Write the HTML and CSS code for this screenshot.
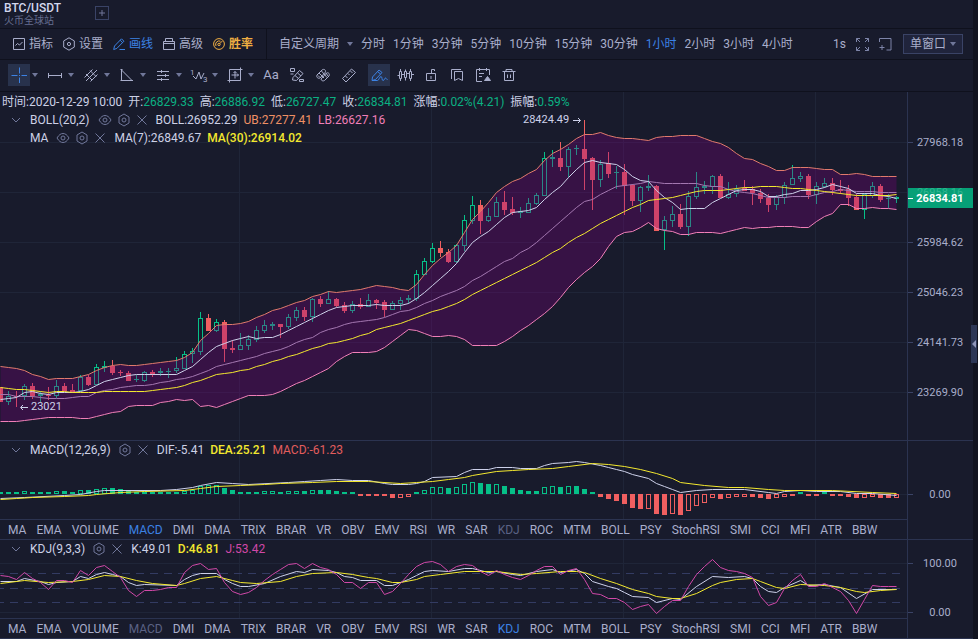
FILE: index.html
```html
<!DOCTYPE html>
<html lang="zh-CN">
<head>
    <meta charset="UTF-8">
    <meta name="viewport" content="width=device-width, initial-scale=1.0">
    <title>BTC/USDT</title>
    <link rel="stylesheet" href="styles.css">
</head>
<body>
    <!-- shared icons -->
    <svg class="symbols" width="0" height="0" aria-hidden="true">
        <symbol id="i-eye" viewBox="0 0 14 12"><path d="M1 6C3 2.6 5 1.5 7 1.5S11 2.6 13 6C11 9.4 9 10.5 7 10.5S3 9.4 1 6z"/><circle cx="7" cy="6" r="2"/></symbol>
        <symbol id="i-hex" viewBox="0 0 12 14"><path d="M6 1l5 3v6l-5 3-5-3V4z"/><circle cx="6" cy="7" r="2"/></symbol>
        <symbol id="i-close" viewBox="0 0 12 12"><path d="M1.5 1.5l9 9M10.5 1.5l-9 9"/></symbol>
        <symbol id="i-down" viewBox="0 0 10 8"><path d="M1 2l4 4 4-4"/></symbol>
    </svg>

    <div class="app">
        <header class="tabbar">
            <div class="pair">
                <h1>BTC/USDT</h1>
                <p>火币全球站</p>
            </div>
            <button class="add" aria-label="添加"><svg width="12" height="12"><path d="M6 3v6M3 6h6"/></svg></button>
        </header>

        <nav class="toolbar">
            <div class="tools">
                <button class="tool"><svg width="12" height="14"><path d="M.5 1.5h11v11H.5zM2.5 8.5l2-2 2 1.5 3-3"/></svg>指标</button>
                <button class="tool"><svg width="12" height="14"><path d="M6 .8l5.3 3.1v6.2L6 13.2.7 10.1V3.9z"/><circle cx="6" cy="7" r="1.6"/></svg>设置</button>
                <button class="tool on"><svg width="12" height="14"><path d="M.7 12.5l.8-3.5 7-7.2 2.4 2.4-7 7.2zM7.2 3.3l2.4 2.4M6.5 12.5H12"/></svg>画线</button>
                <button class="tool"><svg width="12" height="14"><path d="M.5 4.5h11v8H.5zM.5 6.5h11M2.5 4V1.5h7V4"/></svg>高级</button>
                <button class="tool gold"><svg width="12" height="14"><circle cx="6" cy="7" r="5.4"/><path d="M3 9a3.5 3.5 0 0 1 4.5-4.8"/><circle cx="6" cy="7.4" r="1.2"/><path d="M6.8 6.6L9.4 4"/></svg>胜率</button>
            </div>
            <div class="periods">
                <label class="period-select"><select aria-label="自定义周期"><option>自定义周期</option></select><i class="caret"></i></label>
                <button>分时</button>
                <button>1分钟</button>
                <button>3分钟</button>
                <button>5分钟</button>
                <button>10分钟</button>
                <button>15分钟</button>
                <button>30分钟</button>
                <button class="on">1小时</button>
                <button>2小时</button>
                <button>3小时</button>
                <button>4小时</button>
            </div>
            <div class="view">
                <button>1s</button>
                <button aria-label="全屏"><svg width="13" height="13"><path d="M.5 4V.5H4M.5.5L4 4M9 .5h3.5V4M12.5.5L9 4M.5 9v3.500H4M.5 12.5L4 9M12.5 9v3.500H9M12.5 12.5L9 9"/></svg></button>
                <button aria-label="新窗口"><svg width="13" height="13"><path d="M.5 4V.5h11.500V12H7.5M3 7v5M.5 9.5h5"/></svg></button>
                <label class="window-select"><select aria-label="窗口"><option>单窗口</option></select><i class="caret"></i></label>
            </div>
        </nav>

        <div class="drawbar">
            <div class="group wide">
                <button class="on" aria-label="十字线"><svg width="16" height="16"><path d="M.5 8.5h6M10.5 8.5h6M8.5.5v6M8.5 10.5v6M8 8.5h1"/></svg></button><i class="caret"></i>
                <button aria-label="线段"><svg width="16" height="16"><path d="M1.5 6v5M14.5 6v5M1.5 8.5h13"/></svg></button><i class="caret"></i>
                <button aria-label="平行线"><svg width="16" height="16"><path d="M1.5 10.5l8-8M3 14L14 3M7.5 14.5l7-7M3 7l6 6M7 3.5l6 6"/></svg></button><i class="caret"></i>
                <button aria-label="三角形"><svg width="16" height="16"><path d="M2.5 3v10.5H13zM1.5 2.5h2M1.5 13.5h2M12 13.5h2"/></svg></button><i class="caret"></i>
                <button aria-label="斐波那契"><svg width="16" height="16"><path d="M2 4.5h12M2 8.5h12M2 12.5h12M6.5 3v3M10.5 7v3M6.5 11v3"/></svg></button><i class="caret"></i>
                <button aria-label="波浪"><svg width="18" height="16"><path d="M3 9l3 3 3-7 2 7 3-6"/><text x="0" y="8">1</text><text x="13" y="15">3</text></svg></button><i class="caret"></i>
                <button aria-label="测量"><svg width="16" height="16"><path d="M2.5 2.5h11v11h-11zM.5 13.5h4M2.5 13v2.5M11.5 2.5h4M13.5.5v4M8 4.5v7M4.5 8h7M6.5 6L8 4.5 9.5 6M10 6.5L11.5 8 10 9.5"/></svg></button><i class="caret"></i>
            </div>
            <div class="group">
                <button class="letters">Aa</button>
                <button aria-label="画笔"><svg width="16" height="16"><path d="M4 10.5l6.5-7L14 6.5l-6.500 7-4-.5zM6 8.500l3.500 3M8.500 6l3.500 3M1.500 1.500h4v3h-4zM10.500 12.500h4v2h-4zM1.500 7h3"/></svg></button>
                <button aria-label="隐藏"><svg width="16" height="16"><path d="M2 8l5-5c2-1.5 4 0 3.5 2L5 11c-2 1-4-1-3-3zM6 12l5.5-6c2-1 3.5 1 2.5 3l-4.5 4.5c-1.5 1-3.5 0-3.5-1.5zM4 6l5 5M6.500 4l5.500 6.500M3 8.500l2 2M11 6l2 3"/></svg></button>
                <button aria-label="尺子"><svg width="16" height="16"><path d="M1.5 11.5l9-9.5 4 3.5-9.5 9.5zM4.5 9l2 2M7 6.5L8.5 8M9.5 4l2 2"/></svg></button>
            </div>
            <div class="group">
                <button class="on" aria-label="自由画"><svg width="17" height="16"><path d="M1 13.5l.5-3.5 6.5-7 3 2.5-6.5 7zM6.5 4.5l3 2.5M1 13.5h5.5c1.5 0 2-4 3.5-4s.5 4 2 4 1.5-2.5 2.5-2.5.5 1.5 2 1.5"/></svg></button>
                <button aria-label="K线"><svg width="17" height="16"><path d="M2.5 4.5h2v7h-2zM7.5 4.5h2v6h-2zM12.5 4.5h2v7h-2zM3.5 2v2M3.5 12v2M8.5 2.5v2M8.5 11v2.500M13.5 2v2M13.5 12v2M.5 8.5h2M5 7.5h2.5M10 6.5h2M15 7.5h2"/></svg></button>
                <button aria-label="锁定"><svg width="16" height="16"><path d="M3.5 6.5h9v7h-9zM8.5 6V2.5h3V4M8 9v3"/></svg></button>
                <button aria-label="书签"><svg width="16" height="16"><path d="M2.5 12V2.5H12M5.5 4.5h8v9l-4-2-4 2z"/></svg></button>
                <button aria-label="日程"><svg width="17" height="16"><path d="M7 14.5H1.5v-12h13V8M4.5 1v3M11.5 1v3M4 6.5h5M4 9.5h3"/><path d="M9.5 13.5l3-4 3 4z" class="fill"/></svg></button>
                <button aria-label="删除"><svg width="16" height="16"><path d="M1.5 4.5h13M5 4V2.5h6V4M3.5 4.5v9h9v-9M6.5 7.5V11M9.5 7.5V11"/></svg></button>
            </div>
        </div>

        <section class="pane main-pane">
            <div class="plot">
                <svg class="chart" id="price"></svg>
                <div class="legend">
                    <p class="quote"><span>时间:2020-12-29 10:00</span><span>开:<b>26829.33</b></span><span>高:<b>26886.92</b></span><span>低:<b>26727.47</b></span><span>收:<b>26834.81</b></span><span>涨幅:<b>0.02%(4.21)</b></span><span>振幅:<b>0.59%</b></span></p>
                    <div class="row">
                        <button class="fold" aria-label="折叠"><svg width="10" height="8"><use href="#i-down"/></svg></button>
                        <span>BOLL(20,2)</span>
                        <div class="acts">
                            <button aria-label="显示"><svg width="14" height="12"><use href="#i-eye"/></svg></button>
                            <button aria-label="设置"><svg width="12" height="14"><use href="#i-hex"/></svg></button>
                            <button aria-label="关闭"><svg width="12" height="12"><use href="#i-close"/></svg></button>
                        </div>
                        <span>BOLL:26952.29</span><span class="ub">UB:27277.41</span><span class="lb">LB:26627.16</span>
                    </div>
                    <div class="row inner">
                        <span>MA</span>
                        <div class="acts">
                            <button aria-label="显示"><svg width="14" height="12"><use href="#i-eye"/></svg></button>
                            <button aria-label="设置"><svg width="12" height="14"><use href="#i-hex"/></svg></button>
                            <button aria-label="关闭"><svg width="12" height="12"><use href="#i-close"/></svg></button>
                        </div>
                        <span>MA(7):26849.67</span><span class="yellow">MA(30):26914.02</span>
                    </div>
                </div>
            </div>
            <div class="axis"><svg class="chart" id="price-axis"></svg></div>
            <button class="handle" aria-label="展开侧栏"></button>
        </section>

        <section class="pane">
            <div class="column">
                <div class="plot sub">
                    <svg class="chart" id="macd"></svg>
                    <div class="legend">
                        <div class="row">
                            <button class="fold" aria-label="折叠"><svg width="10" height="8"><use href="#i-down"/></svg></button>
                            <span>MACD(12,26,9)</span>
                            <div class="acts">
                                <button aria-label="设置"><svg width="12" height="14"><use href="#i-hex"/></svg></button>
                                <button aria-label="关闭"><svg width="12" height="12"><use href="#i-close"/></svg></button>
                            </div>
                            <span>DIF:-5.41</span><span class="yellow">DEA:25.21</span><span class="red">MACD:-61.23</span>
                        </div>
                    </div>
                </div>
                <div class="indicators" data-on="MACD" data-off="KDJ"></div>
            </div>
            <div class="axis"><svg class="chart" id="macd-axis"></svg></div>
        </section>

        <section class="pane">
            <div class="column">
                <div class="plot sub">
                    <svg class="chart" id="kdj"></svg>
                    <div class="legend">
                        <div class="row">
                            <button class="fold" aria-label="折叠"><svg width="10" height="8"><use href="#i-down"/></svg></button>
                            <span>KDJ(9,3,3)</span>
                            <div class="acts">
                                <button aria-label="设置"><svg width="12" height="14"><use href="#i-hex"/></svg></button>
                                <button aria-label="关闭"><svg width="12" height="12"><use href="#i-close"/></svg></button>
                            </div>
                            <span>K:49.01</span><span class="yellow">D:46.81</span><span class="magenta">J:53.42</span>
                        </div>
                    </div>
                </div>
                <div class="indicators" data-on="KDJ" data-off="MACD"></div>
            </div>
            <div class="axis"><svg class="chart" id="kdj-axis"></svg></div>
        </section>
    </div>
    <script src="chart.js"></script>
</body>
</html>
```

FILE: styles.css
```css
* {
    box-sizing: border-box;
}

body {
    margin: 0;
    background-color: #11131f;
    color: #a9aecb;
    font-family: Roboto, "Noto Sans CJK SC", sans-serif;
    font-size: 12px;
    line-height: 18px;
}

h1, p {
    margin: 0;
}

button, select {
    margin: 0;
    padding: 0;
    border: none;
    background: none;
    color: inherit;
    font: inherit;
    cursor: pointer;
}

select {
    appearance: none;
}

svg {
    display: block;
    fill: none;
    stroke: currentColor;
    flex: none;
}

.symbols {
    position: absolute;
}

.app {
    display: flex;
    flex-direction: column;
    min-height: 100vh;
    margin-right: 5px;
    background-color: #181b2c;
}

.caret {
    width: 0;
    height: 0;
    border: 3px solid transparent;
    border-top: 4px solid #70779a;
    border-bottom: 0;
}

/* header */
.tabbar {
    display: flex;
    gap: 34px;
    height: 29px;
    padding: 2px 4px 0;
    border-bottom: 1px solid #0f111d;
}

.pair h1 {
    color: #d3d7ee;
    font-size: 12px;
    font-weight: 500;
    line-height: 13px;
}

.pair p {
    color: #666e90;
    font-size: 10px;
    line-height: 11px;
}

.add {
    width: 14px;
    height: 14px;
    margin-top: 4px;
    border: 1px solid #3a4366;
    color: #70779a;
}

/* toolbar */
.toolbar {
    display: flex;
    height: 31px;
    border-bottom: 1px solid #0f111d;
    white-space: nowrap;
}

.tools {
    display: flex;
    align-items: center;
    gap: 10px;
    width: 267px;
    padding-left: 13px;
    border-right: 1px solid #0f111d;
}

.tool {
    display: flex;
    align-items: center;
    gap: 4px;
}

.on {
    color: #3c82e4;
}

.gold {
    color: #f0ae42;
    font-weight: 700;
}

.periods {
    display: flex;
    align-items: center;
    gap: 8px;
    padding-left: 12px;
}

.period-select {
    display: flex;
    align-items: center;
    gap: 7px;
}

.view {
    display: flex;
    align-items: center;
    gap: 10px;
    margin-left: auto;
    padding-right: 10px;
}

.view svg {
    color: #7d84a8;
}

.window-select {
    display: flex;
    align-items: center;
    justify-content: space-between;
    width: 60px;
    height: 20px;
    margin-left: 1px;
    padding: 0 6px;
    border: 1px solid #3a4366;
    background-color: #20243c;
}

/* drawing tools */
.drawbar {
    display: flex;
    align-items: center;
    height: 32px;
    padding: 0 0 1px 8px;
    border-bottom: 1px solid #0f111d;
}

.group {
    display: flex;
    align-items: center;
    gap: 4px;
    margin-right: 8px;
}

.group.wide {
    gap: 2px;
    margin-right: 2px;
}

.group.wide .caret {
    margin-right: 4px;
}

.group button {
    display: flex;
    align-items: center;
    justify-content: center;
    width: 22px;
    height: 22px;
}

.group .on {
    background-color: #28324c;
}

.group .letters {
    font-size: 13px;
}

.group text {
    fill: currentColor;
    stroke: none;
    font-size: 8px;
}

.fill {
    fill: currentColor;
}

/* chart panes */
.pane {
    position: relative;
    display: grid;
    grid-template-columns: 1fr 66px;
    border-bottom: 1px solid #2b3350;
}

.main-pane {
    flex: 1;
}

.plot {
    position: relative;
    min-height: 348px;
    overflow: hidden;
}

.plot.sub {
    min-height: 78px;
}

.chart {
    position: absolute;
    width: 100%;
    height: 100%;
}

.axis {
    position: relative;
    border-left: 1px solid #2b3350;
}

.axis text, .mark text {
    fill: #a9aecb;
    stroke: none;
    font-size: 11px;
}

.axis text {
    text-anchor: middle;
}

.axis .tick {
    stroke: #3a4366;
}

.axis .tag {
    fill: #06a077;
    stroke: none;
}

.axis .ghost {
    fill: #2fb58f;
}

.axis .last {
    fill: #fff;
    font-weight: 700;
}

.axis .now {
    stroke: #fff;
}

.grid { stroke: #1f2538; }
.guide { stroke: #333b62; stroke-dasharray: 8 6; }
.band { fill: rgba(128, 0, 128, 0.3); stroke: none; }
.up { stroke: #06c088; }
.down { stroke: #f05f60; }
.up.solid { fill: #06c088; stroke: none; }
.down.solid { fill: #f05f60; stroke: none; }
.white-line { stroke: #cdd1ea; }
.yellow-line { stroke: #f3e82f; }
.upper-line { stroke: #e07a6c; }
.middle-line { stroke: #a377b0; }
.lower-line { stroke: #f07fb8; }
.j-line { stroke: #d148a8; }

.mark text {
    fill: #cdd1ea;
}

.mark path {
    stroke: #cdd1ea;
}

.legend {
    position: absolute;
    top: 0;
    left: 0;
    color: #cdd1e6;
    white-space: nowrap;
}

.main-pane .legend {
    top: 1px;
}

.quote {
    display: flex;
    gap: 6px;
    padding-left: 2px;
}

.quote b {
    color: #0bb183;
    font-weight: 400;
}

.row {
    display: flex;
    align-items: center;
    gap: 6px;
    height: 18px;
    padding-left: 11px;
}

.row.inner {
    padding-left: 30px;
}

.row .yellow {
    color: #f3e82f;
    font-weight: 500;
}

.row .ub { color: #ee9065; }
.row .lb { color: #f07fb8; }
.row .red { color: #e35d5d; }
.row .magenta { color: #d148a8; }

.fold {
    margin-right: 3px;
    color: #70779a;
}

.acts {
    display: flex;
    align-items: center;
    gap: 6px;
    margin: 0 2px;
    color: #70779a;
}

.indicators {
    display: flex;
    align-items: center;
    gap: 10px;
    height: 20px;
    padding-left: 8px;
    border-top: 1px solid #2b3350;
    overflow: hidden;
}

.indicators .off {
    color: #5b6285;
}

/* side panel handle */
.handle {
    position: absolute;
    top: 233px;
    right: -4px;
    display: flex;
    align-items: center;
    justify-content: center;
    width: 6px;
    height: 38px;
    background-color: #2d3756;
}

.handle::before {
    content: "";
    border: 4px solid transparent;
    border-left: 0;
    border-right-color: #8e95b8;
}
```

FILE: chart.js
```js
const STEP = 8;

// open, close, high, low
const candles = [
    [387,402,387,402],[402,396,391,405],[396,397,391,407],[396,386,384,400],[386,396,383,399],[396,394,391,402],[395,396,387,400],[396,386,380,398],
    [386,391,383,391],[390,392,384,392],[391,377,375,391],[377,385,375,386],[385,367,364,385],[368,366,361,372],[366,373,360,375],[372,373,370,376],
    [373,381,371,381],[380,379,375,382],[381,372,371,382],[372,374,370,377],[373,371,368,376],[372,371,368,378],[371,368,357,373],[369,354,351,369],
    [354,351,348,363],[352,318,312,355],[318,331,314,331],[331,322,319,332],[322,349,320,362],[348,350,340,353],[350,345,333,350],[346,339,335,350],
    [340,330,326,342],[331,325,320,333],[326,324,322,330],[324,327,324,338],[327,317,314,329],[318,310,307,321],[310,317,307,321],[317,299,298,322],
    [299,304,296,307],[304,299,291,304],[299,306,298,307],[305,311,302,313],[311,304,301,313],[304,307,298,309],[307,300,294,307],[300,303,299,309],
    [302,310,300,317],[310,303,301,310],[304,300,297,310],[300,298,295,304],[299,274,270,301],[275,261,258,275],[262,248,243,263],[248,253,241,257],
    [252,262,249,263],[262,245,244,263],[246,220,215,251],[221,205,196,224],[205,221,200,234],[221,216,208,222],[217,202,197,217],[202,210,191,215],
    [209,213,197,215],[213,211,207,218],[213,203,198,213],[204,195,193,205],[196,158,152,196],[159,157,150,167],[158,167,142,171],[167,149,147,177],
    [149,148,145,155],[149,159,120,190],[158,180,157,210],[180,164,160,187],[163,174,152,178],[173,172,166,189],[172,186,164,215],[185,201,184,206],
    [201,187,186,212],[188,186,175,191],[186,231,185,231],[230,220,216,250],[221,214,206,227],[214,227,204,229],[227,196,191,236],[197,187,172,199],
    [188,186,181,194],[187,176,175,194],[176,198,174,198],[198,194,182,199],[194,189,185,197],[188,191,180,191],[189,193,186,205],[193,199,189,203],
    [198,205,194,212],[205,197,195,210],[198,185,182,204],[185,178,165,185],[179,176,172,182],[176,195,174,199],[195,186,182,204],[187,183,178,188],
    [183,190,178,195],[189,191,180,194],[189,198,185,206],[197,210,194,210],[210,194,193,219],[196,186,182,198],[186,200,184,202],[199,198,194,208],[199,197,196,203]
];

const upper = [366,367,368,370,374,376,379,378,378,378,376,374,370,367,365,364,365,365,364,363,362,361,360,357,352,340,333,325,324,324,323,321,317,314,310,308,305,302,300,296,294,291,292,291,290,289,287,285,286,287,289,290,284,274,265,258,252,245,232,219,211,202,192,186,181,178,173,169,160,153,149,144,138,134,134,132,135,137,138,138,139,140,137,136,136,135,135,135,138,141,143,147,153,158,159,163,166,170,170,167,167,167,168,169,169,174,174,173,174,176,176,176,176];
const lower = [421,421,421,420,419,418,417,417,417,417,418,418,416,414,412,411,406,405,405,405,402,401,399,400,399,406,405,407,404,401,398,395,395,395,394,391,387,383,380,376,372,368,361,356,352,352,352,351,347,341,335,329,330,333,336,336,335,336,339,345,345,345,345,341,336,330,325,319,313,306,297,287,279,272,266,258,246,236,232,231,227,222,228,230,231,234,234,232,232,232,233,231,229,227,228,227,227,226,226,226,227,227,221,216,213,204,204,208,208,207,208,208,209];
const middle = [394,394,396,396,396,397,398,398,398,397,396,396,392,390,389,387,386,385,385,384,382,381,379,378,376,373,370,366,364,362,360,358,356,353,351,349,346,342,339,337,332,329,327,324,322,321,320,319,317,314,311,310,307,303,300,296,293,290,286,280,276,271,266,261,258,252,248,242,235,228,221,214,207,201,199,194,190,186,185,184,183,181,182,183,183,183,183,183,185,186,186,189,191,192,193,195,197,197,197,196,196,196,194,192,191,189,190,191,191,191,192,192,192];
const ma30 = [387,388,389,389,390,391,392,391,391,392,392,392,392,391,391,391,391,391,391,390,389,388,387,385,382,380,377,374,373,372,370,369,366,364,361,359,356,354,351,348,346,343,342,340,338,335,333,329,327,325,323,320,317,314,311,309,306,303,299,294,290,286,282,278,274,270,266,262,257,252,248,242,237,233,228,223,219,215,211,207,204,200,199,198,197,195,193,191,190,190,190,189,188,187,187,186,186,186,187,188,188,189,190,191,192,193,194,195,195,195,195,195,194];
const ma7 = [399,398,397,392,391,393,394,392,392,392,391,389,385,381,379,377,375,374,374,374,374,374,374,370,366,359,352,346,343,340,338,336,338,337,337,334,330,326,322,318,314,310,307,306,305,305,305,304,305,305,305,303,298,292,285,278,271,263,252,242,236,231,224,217,212,211,210,207,199,192,186,177,169,162,160,162,163,164,169,176,180,181,190,197,202,209,208,208,208,202,198,194,190,189,189,191,196,196,194,193,190,190,189,187,184,186,188,193,193,193,195,196,198];

// bar height, h = hollow
const bars = '2 2 2 3h 2 2 2 3h 3 2 4h 4 5h 6h 6 5 3 2 2 2 2 2 2 3h 4h 8h 9h 9h 6 4 2 2 2 3h 3h 2 3h 3h 3 4h 4 4 3 2 2 -2 -2 -2 -2 -4 -4h -3h 2 4h 7h 7h 6 7h 10h 12h 11 10 10h 8 6 4 3 3 7h 8h 7 8h 8 5 2 -3 -5 -7 -10 -14 -15 -15h -20 -21 -20h -21 -17h -12h -9h -4h -5 -4h -3h -3h -3 -4 -5 -4h -3h -2 2 -2 -2 2 -2 -2 -3 -4 -4h -3h -4 -4 -4h'.split(' ');

// index:y pairs
const dif = '0:498 3:497 8:495 10:494 12:491 13:490 20:490 22:489 24:487 25:485 27:482 29:483 31:484 36:482 38:481 40:480 42:479 44:480 46:480 48:483 49:484 51:484 52:483 53:481 54:477 57:476 58:472 59:469 61:469 62:467 64:467 65:468 67:468 68:465 69:463 71:462 72:461 73:462 75:465 76:467 77:469 78:471 79:474 81:478 82:483 83:486 84:489 85:492 87:490 89:489 93:489 96:492 97:493 98:491 100:490 102:491 105:491 107:493 109:493 112:495';
const dea = '0:499 2:498 4:497 8:496 11:495 12:494 15:492 18:491 23:490 25:488 27:486 30:485 33:484 35:483 39:482 42:481 46:481 50:483 52:482 54:481 56:479 58:477 59:475 62:471 64:470 66:469 69:468 71:466 74:463 76:464 78:466 80:469 82:473 84:478 85:482 88:485 91:487 93:487 96:489 98:490 104:490 109:492 112:493';
const jLine = [575,576,579,572,578,582,589,580,580,582,570,575,567,565,571,577,590,596,590,590,589,587,587,572,565,563,569,568,582,591,594,592,587,580,574,569,564,563,568,563,567,569,574,582,582,588,582,582,594,591,583,574,566,562,561,564,571,566,564,565,571,575,570,574,577,579,575,570,566,566,574,570,568,579,593,594,598,598,602,609,606,604,613,606,600,600,586,574,566,559,567,570,571,573,577,596,605,602,588,580,574,586,586,583,587,591,600,613,599,585,586,586,586];
const kLine = '0:581 2:581 3:578 5:581 6:584 7:582 9:581 10:576 11:578 12:574 13:572 14:574 15:576 16:582 17:585 18:584 22:585 23:579 24:575 25:573 27:573 28:579 29:583 30:586 31:586 33:583 35:576 37:571 38:572 39:569 41:570 42:572 43:576 44:577 45:580 47:580 48:585 49:585 51:579 52:575 53:571 54:570 56:571 58:568 59:568 61:572 62:571 64:574 65:575 67:571 69:569 70:572 72:569 73:573 74:581 76:586 77:588 78:592 79:596 81:597 82:602 84:598 85:599 87:586 89:576 91:577 93:576 94:578 95:586 96:591 97:592 98:587 100:580 101:585 103:584 105:587 107:598 109:589 112:589';
const dLine = '0:583 3:580 6:582 9:581 11:579 13:575 15:576 17:580 19:583 22:585 23:583 25:578 27:576 29:580 30:582 32:583 35:581 37:576 39:573 42:572 44:574 46:577 47:578 49:582 50:582 52:579 53:576 55:574 58:571 62:571 65:574 67:573 70:571 72:571 73:572 75:578 77:583 79:589 81:593 82:596 84:598 85:598 87:593 89:585 90:582 92:579 94:578 95:581 97:587 98:588 100:584 103:585 105:587 107:591 108:592 110:590 112:589';

function toPoints(series) {
    if (typeof series === 'string') {
        return series.split(' ').map(p => {
            const [i, y] = p.split(':').map(Number);
            return [i * STEP + 0.5, y + 0.5];
        });
    }
    return series.map((y, i) => [i * STEP + 0.5, y + 0.5]);
}

function line(series, cls) {
    return `<polyline class="${cls}" points="${toPoints(series).join(' ')}"/>`;
}

function box(x, top, height, cls, hollow) {
    if (hollow && height > 2) {
        return `<rect class="${cls}" x="${x - 1.5}" y="${top + 0.5}" width="4" height="${height - 1}"/>`;
    }
    return `<rect class="${cls} solid" x="${x - 2}" y="${top}" width="5" height="${height}"/>`;
}

function candle([open, close, high, low], i) {
    const x = i * STEP;
    const up = close < open;
    const cls = up ? 'up' : 'down';
    const top = Math.min(open, close);
    const bottom = Math.max(open, close, top + 1);
    return `<path class="${cls}" d="M${x + 0.5} ${high}V${top}M${x + 0.5} ${bottom}V${Math.max(low, bottom)}"/>`
        + box(x, top, bottom - top, cls, up);
}

function grid(rows, top) {
    const cols = [239, 431, 623, 815].map(x =>
        `<line class="grid" x1="${x + 0.5}" x2="${x + 0.5}" y1="0" y2="100%"/>`);
    const lines = rows.map(y =>
        `<line class="grid" x1="0" x2="100%" y1="${y - top + 0.5}" y2="${y - top + 0.5}"/>`);
    return cols.concat(lines).join('');
}

function draw(id, top, rows, content) {
    document.getElementById(id).innerHTML = grid(rows, top) + `<g transform="translate(0 ${-top})">${content}</g>`;
}

function axis(id, top, labels, extra = '') {
    document.getElementById(id).innerHTML = labels.map(([y, text]) =>
        `<path class="tick" d="M0 ${y - top + 0.5}h5"/><text x="32" y="${y - top + 4}">${text}</text>`
    ).join('') + extra;
}

// price
const band = toPoints(upper).concat(toPoints(lower).reverse()).join(' ');
draw('price', 92, [142, 192, 242, 292, 342, 392],
    candles.map(candle).join('')
    + `<polygon class="band" points="${band}"/>`
    + line(upper, 'upper-line') + line(lower, 'lower-line') + line(middle, 'middle-line')
    + line(ma7, 'white-line') + line(ma30, 'yellow-line')
    + '<g class="mark"><text x="523" y="123">28424.49</text><path d="M573 120.5h7M578 118l2.5 2.5-2.5 2.5"/>'
    + '<text x="31" y="410">23021</text><path d="M28 407.5h-7M23 405l-2.5 2.5 2.5 2.5"/></g>'
);
axis('price-axis', 92, [[142, '27968.18'], [242, '25984.62'], [292, '25046.23'], [342, '24141.73'], [392, '23269.90']],
    '<rect class="tag" x="0" y="96" width="66" height="20"/><text class="ghost" x="32" y="104">26958.16</text>'
    + '<text class="last" x="32" y="110">26834.81</text><path class="now" d="M0 106.5h5"/>'
);

// macd
draw('macd', 441, [494],
    bars.map((b, i) => {
        const v = parseInt(b);
        return box(i * STEP, v > 0 ? 494 - v : 494, Math.abs(v), v > 0 ? 'up' : 'down', b.endsWith('h'));
    }).join('')
    + line(dif, 'white-line') + line(dea, 'yellow-line')
);
axis('macd-axis', 441, [[494, '0.00']]);

// kdj
draw('kdj', 540, [563, 612],
    [573, 588, 602].map(y => `<path class="guide" d="M-4 ${y + 0.5}H904"/>`).join('')
    + line(kLine, 'white-line') + line(dLine, 'yellow-line') + line(jLine, 'j-line')
);
axis('kdj-axis', 540, [[563, '100.00'], [612, '0.00']]);

// indicator tabs
const names = ['MA', 'EMA', 'VOLUME', 'MACD', 'DMI', 'DMA', 'TRIX', 'BRAR', 'VR', 'OBV', 'EMV', 'RSI', 'WR', 'SAR', 'KDJ', 'ROC', 'MTM', 'BOLL', 'PSY', 'StochRSI', 'SMI', 'CCI', 'MFI', 'ATR', 'BBW'];
document.querySelectorAll('.indicators').forEach(el => {
    names.forEach(name => {
        const tab = document.createElement('button');
        tab.textContent = name;
        if (name === el.dataset.on) tab.className = 'on';
        if (name === el.dataset.off) tab.className = 'off';
        el.appendChild(tab);
    });
});
```
